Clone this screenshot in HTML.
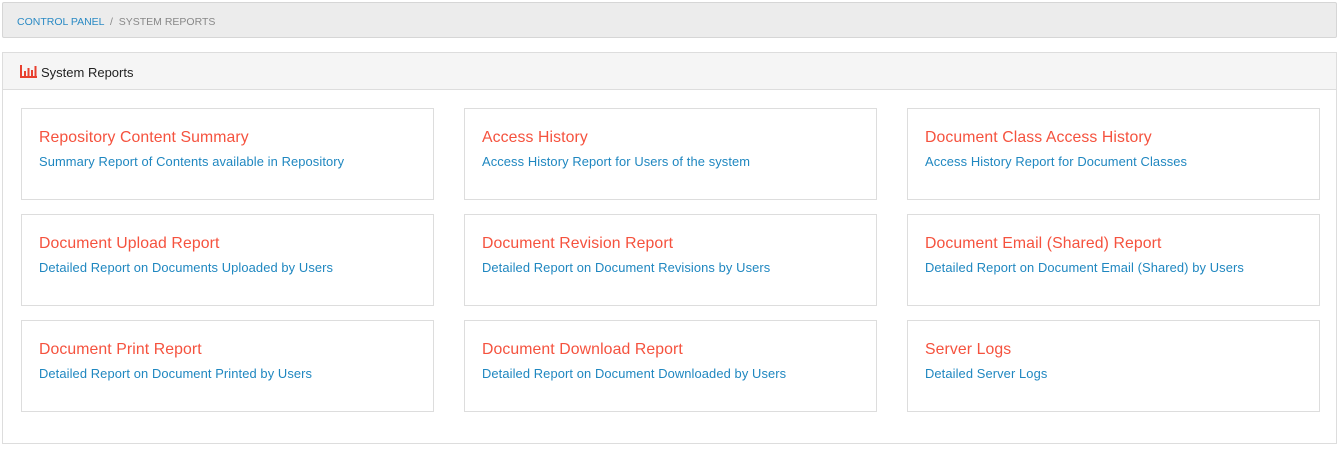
<!DOCTYPE html>
<html><head><style>
body{margin:0;background:#fff;font-family:"Liberation Sans",sans-serif;width:1338px;height:461px;overflow:hidden;position:relative}
.bc{position:absolute;left:2px;top:2px;width:1333px;height:34px;background:#ececec;border:1px solid #d6d6d6;border-radius:2px;font-size:10.5px;line-height:38px;color:#888}
.bc span{margin-left:14px;color:#2a8ac4}
.panel{position:absolute;left:2px;top:52px;width:1333px;height:390px;border:1px solid #ddd}
.hd{height:36px;background:#f5f5f5;border-bottom:1px solid #ddd;font-size:13px;line-height:40px;color:#222;padding-left:17px}
.card{position:absolute;width:411px;height:90px;border:1px solid #ddd;background:#fff}
.t{position:absolute;left:17px;top:20px;font-size:15.8px;color:#f5523e;letter-spacing:0.1px}
.s{position:absolute;left:17px;top:45px;font-size:12.9px;color:#1f87c0;letter-spacing:0.1px}
</style></head><body>
<div class="bc"><span>CONTROL PANEL</span> &nbsp;/&nbsp; SYSTEM REPORTS</div>
<div class="panel"><div class="hd"><svg width="17" height="13" viewBox="0 0 17 13" style="vertical-align:-1px;margin-right:4px"><path d="M1 0v12h16" stroke="#e8402f" stroke-width="2" fill="none"/><rect x="4" y="6" width="2" height="5" fill="#e8402f"/><rect x="7.5" y="3" width="2" height="8" fill="#e8402f"/><rect x="11" y="5" width="2" height="6" fill="#e8402f"/><rect x="14.5" y="1" width="2" height="10" fill="#e8402f"/></svg>System Reports</div></div>
<div class="card" style="left:21px;top:108px"><div class="t">Repository Content Summary</div><div class="s">Summary Report of Contents available in Repository</div></div>
<div class="card" style="left:464px;top:108px"><div class="t">Access History</div><div class="s">Access History Report for Users of the system</div></div>
<div class="card" style="left:907px;top:108px"><div class="t">Document Class Access History</div><div class="s">Access History Report for Document Classes</div></div>
<div class="card" style="left:21px;top:214px"><div class="t">Document Upload Report</div><div class="s">Detailed Report on Documents Uploaded by Users</div></div>
<div class="card" style="left:464px;top:214px"><div class="t">Document Revision Report</div><div class="s">Detailed Report on Document Revisions by Users</div></div>
<div class="card" style="left:907px;top:214px"><div class="t">Document Email (Shared) Report</div><div class="s">Detailed Report on Document Email (Shared) by Users</div></div>
<div class="card" style="left:21px;top:320px"><div class="t">Document Print Report</div><div class="s">Detailed Report on Document Printed by Users</div></div>
<div class="card" style="left:464px;top:320px"><div class="t">Document Download Report</div><div class="s">Detailed Report on Document Downloaded by Users</div></div>
<div class="card" style="left:907px;top:320px"><div class="t">Server Logs</div><div class="s">Detailed Server Logs</div></div>
</body></html>
